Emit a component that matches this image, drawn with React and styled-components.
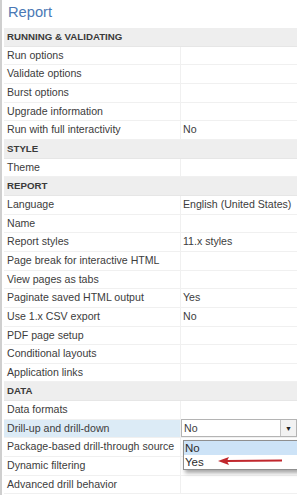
import React from 'react';
import styled, { createGlobalStyle } from 'styled-components';

const ROW_H = 18.67;
const LABEL_W = 177;

const GlobalStyle = createGlobalStyle`
  html, body {
    margin: 0;
    padding: 0;
    background: #fff;
  }
  body {
    font-family: "Liberation Sans", Arial, sans-serif;
  }
`;

const Panel = styled.div`
  width: 297px;
  height: 495px;
  box-sizing: border-box;
  border-left: 2px solid #cfcfcf;
  padding-left: 2px;
  overflow: hidden;
  position: relative;
`;

const Title = styled.div`
  height: 28px;
  padding-left: 4px;
  font-size: 14.7px;
  line-height: 25px;
  color: #4a78b5;
`;

const Row = styled.div`
  display: flex;
  height: ${ROW_H}px;
  box-sizing: border-box;
  border-bottom: 1px solid #f0f0f0;
  font-size: 10.6px;
  color: #3c3c3c;
  position: relative;
  z-index: ${(p) => (p.$raised ? 3 : 'auto')};
`;

const Header = styled.div`
  height: ${ROW_H}px;
  box-sizing: border-box;
  background: #eeeeee;
  padding-left: 3px;
  font-size: 9.7px;
  font-weight: bold;
  color: #3a3a3a;
  line-height: ${ROW_H}px;
  border-bottom: 1px solid #e6e6e6;
`;

const Label = styled.div`
  width: ${LABEL_W}px;
  flex: none;
  box-sizing: border-box;
  padding-left: 3px;
  line-height: ${ROW_H - 1}px;
  white-space: nowrap;
  overflow: hidden;
  background: ${(p) => (p.$active ? '#dcebf6' : 'transparent')};
  border-right: 1px solid #f0f0f0;
`;

const Value = styled.div`
  flex: 1;
  padding-left: 2px;
  line-height: ${ROW_H - 1}px;
  white-space: nowrap;
`;

const Select = styled.div`
  flex: 1;
  display: flex;
  border: 1px solid #b4b4b4;
  margin: -1px 0 0 0;
  height: ${ROW_H}px;
  box-sizing: border-box;
  background: #fff;
`;

const SelectText = styled.div`
  flex: 1;
  padding-left: 2px;
  line-height: ${ROW_H - 2}px;
`;

const SelectButton = styled.div`
  width: 15px;
  border-left: 1px solid #c4c4c4;
  background: #f2f2f2;
  display: flex;
  align-items: center;
  justify-content: center;
  font-size: 7px;
  color: #222;
`;

const DropList = styled.div`
  position: absolute;
  left: ${LABEL_W + 2}px;
  right: -2px;
  top: ${ROW_H + 2}px;
  height: 30px;
  box-sizing: border-box;
  background: #fff;
  border: 1px solid #8f8f8f;
  box-shadow: 2px 3px 4px rgba(0, 0, 0, 0.35);
  z-index: 2;
  font-size: 11.5px;
`;

const Option = styled.div`
  height: 14px;
  line-height: 14px;
  padding-left: 1px;
  color: #2b2b2b;
  background: ${(p) => (p.$selected ? '#cde3f7' : 'transparent')};
`;

const Arrow = styled.svg`
  position: absolute;
  left: 34px;
  top: 16px;
  overflow: visible;
`;

const sections = [
  {
    title: 'RUNNING & VALIDATING',
    rows: [
      ['Run options'],
      ['Validate options'],
      ['Burst options'],
      ['Upgrade information'],
      ['Run with full interactivity', 'No'],
    ],
  },
  { title: 'STYLE', rows: [['Theme']] },
  {
    title: 'REPORT',
    rows: [
      ['Language', 'English (United States)'],
      ['Name'],
      ['Report styles', '11.x styles'],
      ['Page break for interactive HTML'],
      ['View pages as tabs'],
      ['Paginate saved HTML output', 'Yes'],
      ['Use 1.x CSV export', 'No'],
      ['PDF page setup'],
      ['Conditional layouts'],
      ['Application links'],
    ],
  },
  {
    title: 'DATA',
    rows: [
      ['Data formats'],
      ['Drill-up and drill-down', 'No', 'select'],
      ['Package-based drill-through source'],
      ['Dynamic filtering'],
      ['Advanced drill behavior'],
    ],
  },
];

function PropRow({ label, value, kind }) {
  if (kind === 'select') {
    return (
      <Row $raised>
        <Label $active>{label}</Label>
        <Select>
          <SelectText>{value}</SelectText>
          <SelectButton>▼</SelectButton>
        </Select>
        <DropList>
          <Option $selected>No</Option>
          <Option>Yes</Option>
          <Arrow width="66" height="8">
            <path d="M8 4 L64 3.5" stroke="#c1272d" strokeWidth="2.2" fill="none" />
            <path d="M0 4 L11 0 L9 4 L11 8 Z" fill="#c1272d" />
          </Arrow>
        </DropList>
      </Row>
    );
  }
  return (
    <Row>
      <Label>{label}</Label>
      <Value>{value}</Value>
    </Row>
  );
}

export default function App() {
  return (
    <>
      <GlobalStyle />
      <Panel>
        <Title>Report</Title>
        {sections.map((s) => (
          <React.Fragment key={s.title}>
            <Header>{s.title}</Header>
            {s.rows.map(([label, value, kind]) => (
              <PropRow key={label} label={label} value={value} kind={kind} />
            ))}
          </React.Fragment>
        ))}
      </Panel>
    </>
  );
}
